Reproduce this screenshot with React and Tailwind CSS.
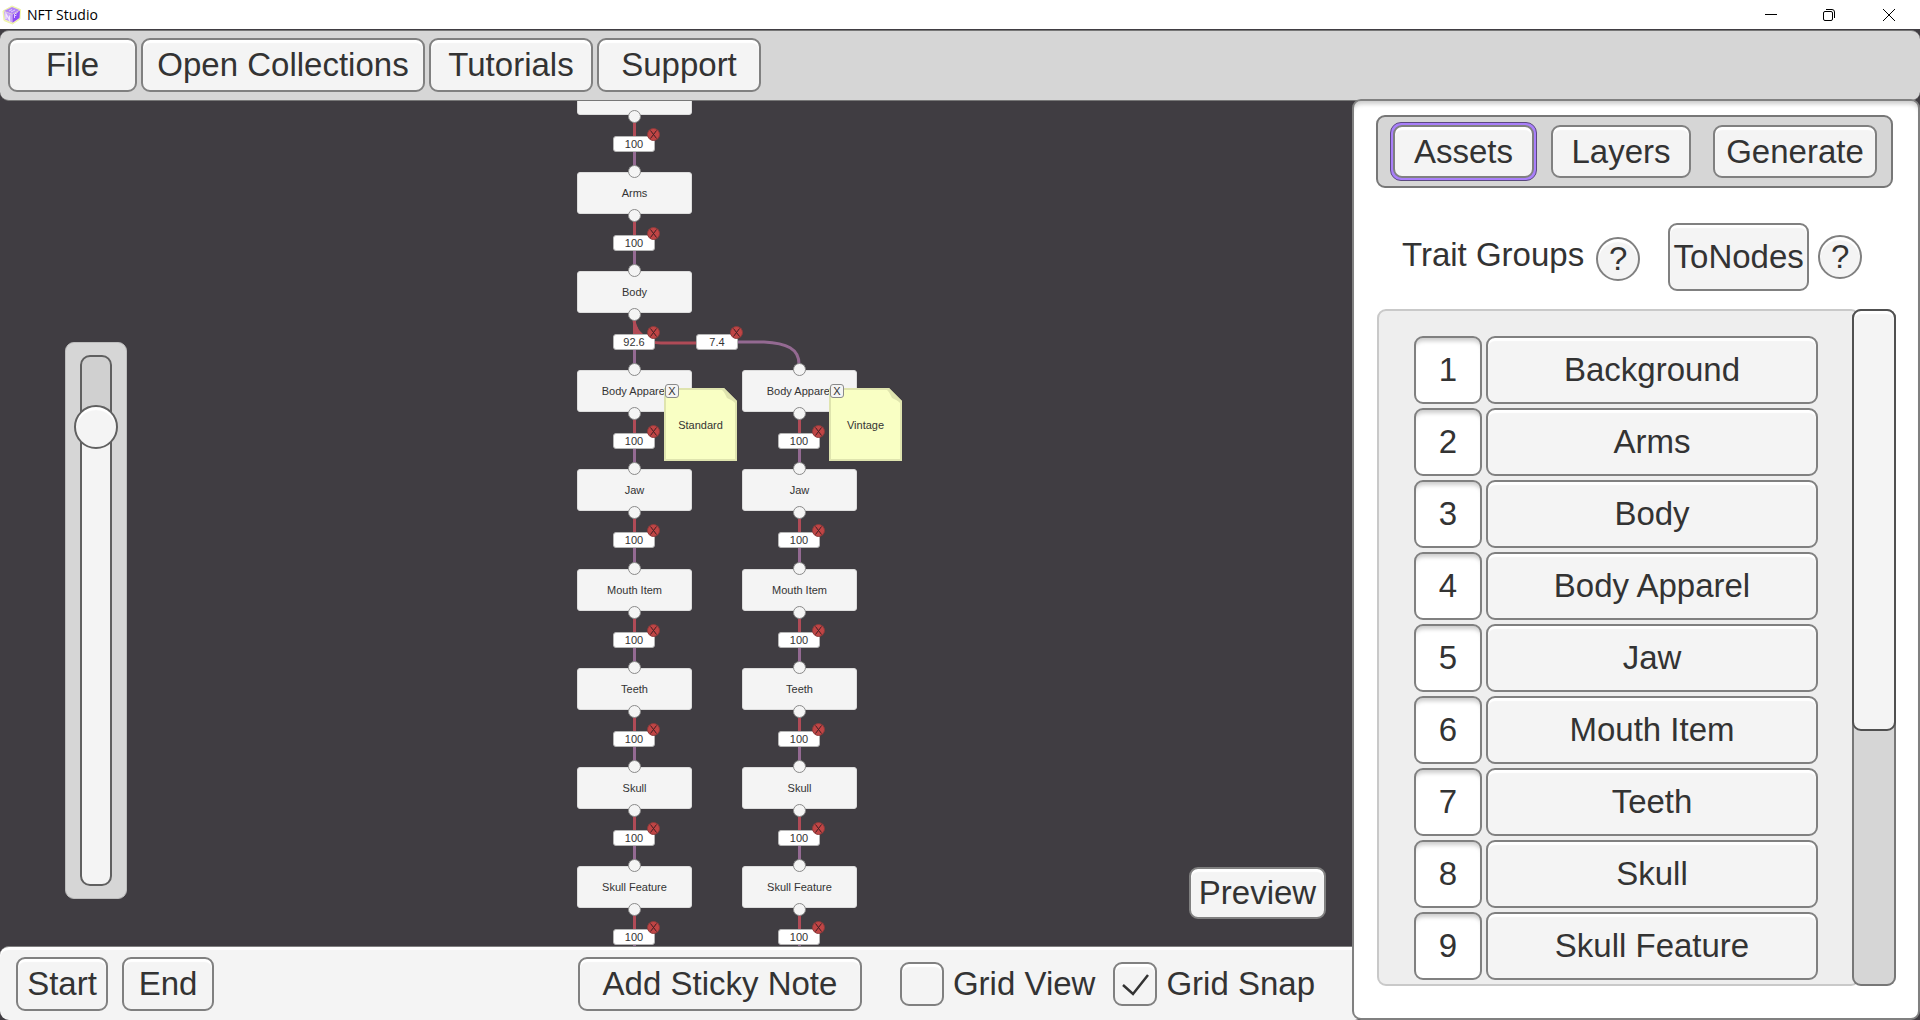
import React from "react";

const buttonStyle =
  "flex items-center justify-center whitespace-nowrap rounded-[9px] border-2 border-[#808080] bg-[#f4f4f4] shadow-[inset_0_3px_1px_#ffffff]";

function Button({ className = "", children, ...rest }) {
  return (
    <button type="button" className={`${buttonStyle} ${className}`} {...rest}>
      {children}
    </button>
  );
}

function AppLogo() {
  return (
    <svg viewBox="0 0 20 20" className="size-5" aria-hidden="true">
      <path d="M10 1 18.5 4.5 18 14 10.5 19 2 15.5 1 6Z" fill="#f3f5b8" stroke="#eff5a6" strokeLinejoin="round" />
      <path d="M2 6.500 10.500 9.500 10.500 17.500 3 14.500Z" fill="#c9a2fb" />
      <path d="M2 6 10 2 17.500 5 10.500 9Z" fill="#b384f8" />
      <path d="M10.500 9.500 18 5.500 17.500 13 10.500 17.800Z" fill="#8e4cf5" />
      <path d="M4 14V9l3.500 6v-4.500" fill="none" stroke="#f1e6ff" strokeWidth="1.300" />
      <path d="m7 6 3-1.500M9 7l4-2M12.500 13V9l3-1.500M12.500 11l2-1" fill="none" stroke="#e3cfff" strokeWidth="1" />
    </svg>
  );
}

function TitleBar() {
  return (
    <header className="flex h-[29px] items-center bg-white pl-[2px] text-black">
      <AppLogo />
      <h1 className="ml-[5px] flex-1 font-['Open_Sans',sans-serif] text-[14px] leading-5">NFT Studio</h1>
      <div className="flex h-full">
        <button type="button" aria-label="Minimize" className="flex w-[58px] items-center justify-center">
          <svg viewBox="0 0 12 12" className="size-3" stroke="currentColor"><path d="M0 5.500h12" /></svg>
        </button>
        <button type="button" aria-label="Restore" className="flex w-[58px] items-center justify-center">
          <svg viewBox="0 0 12 12" className="size-3" stroke="currentColor" fill="none">
            <rect x="0.500" y="2.500" width="9" height="9" rx="1.500" />
            <path d="M3 .5h6A2.500 2.500 0 0 1 11.500 3v6" />
          </svg>
        </button>
        <button type="button" aria-label="Close" className="flex w-[62px] items-center justify-center">
          <svg viewBox="0 0 12 12" className="size-3" stroke="currentColor"><path d="m0 0 12 12M12 0 0 12" /></svg>
        </button>
      </div>
    </header>
  );
}

function MenuBar() {
  return (
    <nav className="mt-px flex h-[71px] gap-1 rounded-[9px] border-y border-[#777777] bg-[#d6d6d6] px-2 pt-[7px]">
      <Button className="h-[54px] w-[129px]">File</Button>
      <Button className="h-[54px] w-[284px]">Open Collections</Button>
      <Button className="h-[54px] w-[164px]">Tutorials</Button>
      <Button className="h-[54px] w-[164px]">Support</Button>
    </nav>
  );
}

const LEFT_X = 577;
const RIGHT_X = 742;
const rowY = (i) => Math.round(-28 + i * 99.1);

const leftNames = ["", "Arms", "Body", "Body Apparel", "Jaw", "Mouth Item", "Teeth", "Skull", "Skull Feature"];
const rightNames = leftNames.slice(3);

const nodes = [
  ...leftNames.map((name, i) => ({ name, x: LEFT_X, y: rowY(i), value: i === 2 ? "92.6" : "100" })),
  ...rightNames.map((name, i) => ({ name, x: RIGHT_X, y: rowY(i + 3), value: "100" })),
];

function Port({ className }) {
  return <span className={`absolute left-[51px] size-[13px] rounded-full border border-[#8a8a8a] bg-[#f4f4f4] ${className}`} />;
}

function Weight({ value, className }) {
  return (
    <div className={`absolute h-4 w-[42px] ${className}`}>
      <input
        aria-label="Weight"
        defaultValue={value}
        className="block h-4 w-full rounded-[3px] border border-[#b5b5b5] bg-white text-center text-[11px] leading-4"
      />
      <button
        type="button"
        aria-label="Remove link"
        className="absolute -top-2 left-[34px] flex size-[13px] items-center justify-center rounded-full border border-[#8c3b3b] bg-[#c04545]"
      >
        <svg viewBox="0 0 9 9" className="size-[9px]" stroke="#402024"><path d="M1.500.5l6 8M7.500.5l-6 8" /></svg>
      </button>
    </div>
  );
}

function TraitNode({ name, x, y, value }) {
  return (
    <div className="absolute w-[115px]" style={{ left: x, top: y }}>
      <div className="flex h-[42px] items-center justify-center rounded-[3px] border border-[#dcdcdc] bg-[#f4f4f4] text-[11px] leading-4">
        {name}
      </div>
      <span className="absolute left-14 top-[49px] h-4 w-[3px] bg-[#b04b57]" />
      <span className="absolute left-14 top-[78px] h-[18px] w-[3px] bg-[#946a92]" />
      <Port className="-top-[7px]" />
      <Port className="top-[37px]" />
      <Weight value={value} className="left-9 top-[63px]" />
    </div>
  );
}

function StickyNote({ text, x, y }) {
  return (
    <div className="absolute size-[73px]" style={{ left: x, top: y }}>
      <svg viewBox="0 0 73 73" className="block size-full">
        <path d="M0 0H60L73 13V73H0Z" fill="#dfe4ae" />
        <path d="M2 2H58L71 15V71H2Z" fill="#f9ffc4" />
        <path d="M58 0H60L73 13V15L63 10Z" fill="#dfe4ae" />
      </svg>
      <p className="absolute inset-0 flex items-center justify-center text-[11px] leading-4">{text}</p>
      <button
        type="button"
        aria-label="Remove note"
        className="absolute -top-1 left-[1px] flex size-[14px] items-center justify-center rounded-[3px] border border-[#8a8a8a] bg-[#f4f4f4] text-[11px] leading-3"
      >
        X
      </button>
    </div>
  );
}

function ZoomSlider() {
  return (
    <div className="absolute left-[65px] top-[241px] flex h-[557px] w-[62px] items-center justify-center rounded-[9px] border border-[#bdbdbd] bg-[#d6d6d6]">
      <input
        type="range"
        aria-label="Zoom"
        min="0"
        max="100"
        defaultValue="90"
        className="h-[531px] w-[44px] appearance-none bg-transparent [direction:rtl] [writing-mode:vertical-lr] [&::-webkit-slider-runnable-track]:h-full [&::-webkit-slider-runnable-track]:w-[32px] [&::-webkit-slider-runnable-track]:rounded-[10px] [&::-webkit-slider-runnable-track]:border-2 [&::-webkit-slider-runnable-track]:border-[#606060] [&::-webkit-slider-runnable-track]:bg-[linear-gradient(#d0d0d0_65px,#f4f4f4_65px)] [&::-webkit-slider-thumb]:-ml-2 [&::-webkit-slider-thumb]:h-[44px] [&::-webkit-slider-thumb]:w-[44px] [&::-webkit-slider-thumb]:appearance-none [&::-webkit-slider-thumb]:rounded-[50%] [&::-webkit-slider-thumb]:border-2 [&::-webkit-slider-thumb]:border-[#606060] [&::-webkit-slider-thumb]:bg-[#f4f4f4] [&::-webkit-slider-thumb]:shadow-[inset_0_3px_1px_#ffffff]"
      />
    </div>
  );
}

function Canvas() {
  return (
    <main className="relative min-h-[845px] flex-1 overflow-hidden bg-[#403d42]">
      <svg className="absolute left-[577px] top-[215px] h-[60px] w-[280px]" viewBox="0 0 280 60" fill="none" aria-hidden="true">
        <path d="M57 4 58 20H68L62 14Z" fill="#b84a4e" />
        <path d="M57 5C60 20 70 27 84 27H120" stroke="#b04b57" strokeWidth="3" />
        <path d="M160 26H187C210 27 222 33 222 48" stroke="#946a92" strokeWidth="3" />
      </svg>
      {nodes.map((node) => (
        <TraitNode key={`${node.x}-${node.y}`} {...node} />
      ))}
      <Weight value="7.4" className="left-[696px] top-[233px]" />
      <StickyNote text="Standard" x={664} y={287} />
      <StickyNote text="Vintage" x={829} y={287} />
      <ZoomSlider />
      <Button className="absolute bottom-[27px] right-[26px] h-[52px] w-[137px]">Preview</Button>
    </main>
  );
}

function CheckOption({ label, checked = false }) {
  return (
    <label className="flex items-center gap-[9px] whitespace-nowrap">
      <span className="relative size-11">
        <input
          type="checkbox"
          defaultChecked={checked}
          className="peer block size-11 appearance-none rounded-[9px] border-2 border-[#808080] bg-[#f4f4f4] shadow-[inset_0_3px_1px_#ffffff]"
        />
        <svg
          viewBox="0 0 44 44"
          className="pointer-events-none absolute inset-0 hidden size-11 peer-checked:block"
          fill="none"
          stroke="#333333"
          strokeWidth="2.500"
        >
          <path d="M10 23 20 32 35 13" />
        </svg>
      </span>
      {label}
    </label>
  );
}

function BottomBar() {
  return (
    <footer className="-mr-3 flex h-[74px] items-center rounded-[9px] border-t border-[#808080] bg-[#f4f4f4] pl-4 pr-[49px] shadow-[inset_0_3px_0_#ffffff]">
      <Button className="h-[54px] w-[92px]">Start</Button>
      <Button className="ml-[14px] h-[54px] w-[92px]">End</Button>
      <div className="ml-auto flex items-center">
        <Button className="mr-[38px] h-[54px] w-[284px]">Add Sticky Note</Button>
        <CheckOption label="Grid View" />
        <span className="w-[18px]" />
        <CheckOption label="Grid Snap" checked />
      </div>
    </footer>
  );
}

function HelpButton({ className = "", label }) {
  return (
    <Button aria-label={label} className={`size-11 rounded-full ${className}`}>
      ?
    </Button>
  );
}

const traits = ["Background", "Arms", "Body", "Body Apparel", "Jaw", "Mouth Item", "Teeth", "Skull", "Skull Feature"];

function SidePanel() {
  return (
    <aside className="relative -mt-[2px] flex w-[568px] shrink-0 flex-col rounded-[9px] border-2 border-[#808080] bg-white px-[22px] pt-[14px] shadow-[inset_0_6px_4px_-3px_#cccccc]">
      <div className="mr-[3px] flex h-[73px] items-center rounded-[9px] border-2 border-[#777777] bg-[#d6d6d6] pl-3 pr-[14px]">
        <div className="rounded-[11px] border border-[#5b4a80] bg-[#a97ffa] p-[2px]">
          <Button aria-pressed="true" className="h-[53px] w-[141px]">Assets</Button>
        </div>
        <Button className="ml-[14px] h-[53px] w-[140px]">Layers</Button>
        <Button className="ml-auto h-[53px] w-[164px]">Generate</Button>
      </div>
      <div className="mt-[35px] flex h-[68px] items-center pl-[26px]">
        <h2 className="-mt-1">Trait Groups</h2>
        <HelpButton label="About trait groups" className="ml-3 mt-1" />
        <Button className="ml-7 h-[68px] w-[141px]">ToNodes</Button>
        <HelpButton label="About nodes" className="ml-[9px]" />
      </div>
      <div className="ml-px mt-[18px] flex">
        <ol className="-mr-2 flex-1 space-y-1 rounded-[9px] border-2 border-[#c9c9c9] bg-[#eeeeee] pb-1 pl-[35px] pr-10 pt-[25px]">
          {traits.map((trait, i) => (
            <li key={trait} className="flex gap-1">
              <input
                aria-label={`${trait} order`}
                defaultValue={i + 1}
                className="h-[68px] w-[68px] rounded-[9px] border-2 border-[#808080] bg-white text-center shadow-[inset_0_6px_4px_-3px_#cccccc]"
              />
              <Button className="h-[68px] flex-1">{trait}</Button>
            </li>
          ))}
        </ol>
        <div className="w-11 rounded-[9px] bg-[#d6d6d6] shadow-[inset_0_0_0_2px_#777777]">
          <div className="h-[422px] rounded-[9px] border-2 border-[#505050] bg-[#f4f4f4] shadow-[inset_0_3px_1px_#ffffff]" />
        </div>
      </div>
    </aside>
  );
}

export default function App() {
  return (
    <div className="flex min-h-screen flex-col bg-[#403d42] font-['Liberation_Sans',Arial,sans-serif] text-[33px] leading-10 text-[#333333]">
      <TitleBar />
      <MenuBar />
      <div className="flex flex-1">
        <div className="flex min-w-0 flex-1 flex-col">
          <Canvas />
          <BottomBar />
        </div>
        <SidePanel />
      </div>
    </div>
  );
}
